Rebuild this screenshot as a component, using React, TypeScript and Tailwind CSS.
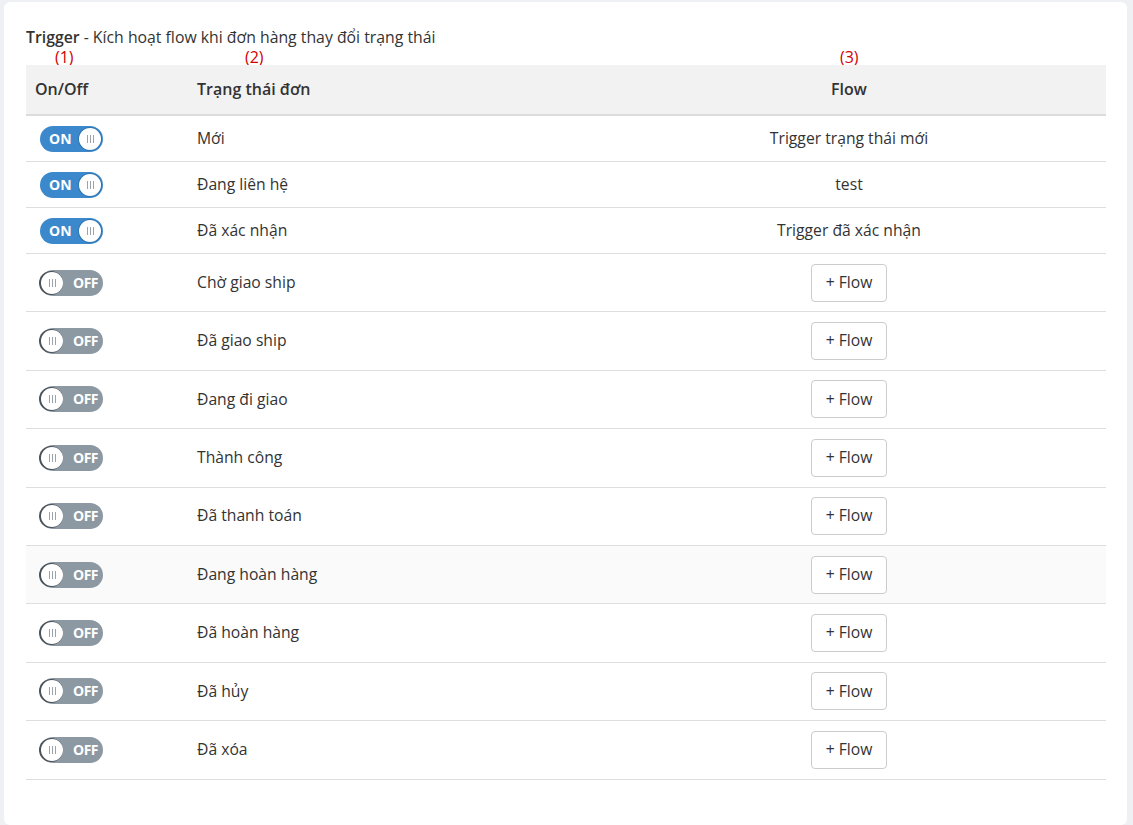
import React from 'react';

interface Row {
  status: string;
  on: boolean;
  flow?: string;
}

const rows: Row[] = [
  { status: 'Mới', on: true, flow: 'Trigger trạng thái mới' },
  { status: 'Đang liên hệ', on: true, flow: 'test' },
  { status: 'Đã xác nhận', on: true, flow: 'Trigger đã xác nhận' },
  { status: 'Chờ giao ship', on: false },
  { status: 'Đã giao ship', on: false },
  { status: 'Đang đi giao', on: false },
  { status: 'Thành công', on: false },
  { status: 'Đã thanh toán', on: false },
  { status: 'Đang hoàn hàng', on: false },
  { status: 'Đã hoàn hàng', on: false },
  { status: 'Đã hủy', on: false },
  { status: 'Đã xóa', on: false },
];

function Knob({ on }: { on: boolean }) {
  return (
    <span
      className={`flex h-[22px] w-[22px] items-center justify-center gap-[2px] rounded-full bg-white ${
        on ? 'shadow-[0_0_0_1px_#2f74b0]' : 'shadow-[-1px_0_0_1px_#4a5259]'
      }`}
    >
      <span className="h-[8px] w-px bg-[#9aa3aa]" />
      <span className="h-[8px] w-px bg-[#9aa3aa]" />
      <span className="h-[8px] w-px bg-[#9aa3aa]" />
    </span>
  );
}

function Toggle({ on }: { on: boolean }) {
  if (on) {
    return (
      <div className="flex h-[26px] w-[63px] items-center justify-between rounded-full bg-[#3b88cc] pl-[9px] pr-[2px]">
        <span className="text-[14px] font-bold leading-none text-white">ON</span>
        <Knob on />
      </div>
    );
  }
  return (
    <div className="flex h-[26px] w-[63px] items-center justify-between rounded-full bg-[#8c98a2] pl-[1px] pr-[5px]">
      <Knob on={false} />
      <span className="text-[14px] font-bold leading-none tracking-[-0.5px] text-white">OFF</span>
    </div>
  );
}

export default function App() {
  return (
    <div
      className="min-h-[825px] bg-[#eef0f3] pl-[4px] pr-[6px] pt-[2px] text-[#333]"
      style={{ fontFamily: '"Open Sans", "Noto Sans", sans-serif' }}
    >
      <div className="h-[823px] rounded-[6px] bg-white px-[22px] pt-[24px] pr-[21px]">
        <div className="text-[15.8px] leading-[22px]">
          <span className="font-semibold">Trigger</span> - Kích hoạt flow khi đơn hàng thay đổi trạng thái
        </div>

        {/* annotations */}
        <div className="flex h-[17px] text-[16px] leading-[18px] text-[#d40000]">
          <span className="ml-[29px] w-[190px]">(1)</span>
          <span className="w-[595px]">(2)</span>
          <span>(3)</span>
        </div>

        <div className="grid grid-cols-[161px_405px_1fr]">
          <div className="col-span-3 grid h-[51px] grid-cols-subgrid items-center border-b-2 border-[#dcdcdc] bg-[#f2f2f2] pb-[1px] text-[16px] font-semibold">
            <div className="pl-[9px]">On/Off</div>
            <div className="pl-[10px]">Trạng thái đơn</div>
            <div className="text-center">Flow</div>
          </div>

          {rows.map((r) => (
            <div
              key={r.status}
              className={`col-span-3 grid grid-cols-subgrid items-center border-b border-[#dedede] text-[15.7px] ${
                r.on ? 'h-[46px]' : 'h-[58.4px]'
              } ${r.status === 'Đang hoàn hàng' ? 'bg-[#fafafa]' : ''}`}
            >
              <div className="pl-[14px]">
                <Toggle on={r.on} />
              </div>
              <div className="pl-[10px]">{r.status}</div>
              <div className="flex justify-center">
                {r.flow ? (
                  <span>{r.flow}</span>
                ) : (
                  <button className="h-[38px] w-[76px] rounded-[4px] border border-[#cccccc] bg-white text-[15.7px] text-[#333]">
                    + Flow
                  </button>
                )}
              </div>
            </div>
          ))}
        </div>
      </div>
    </div>
  );
}
